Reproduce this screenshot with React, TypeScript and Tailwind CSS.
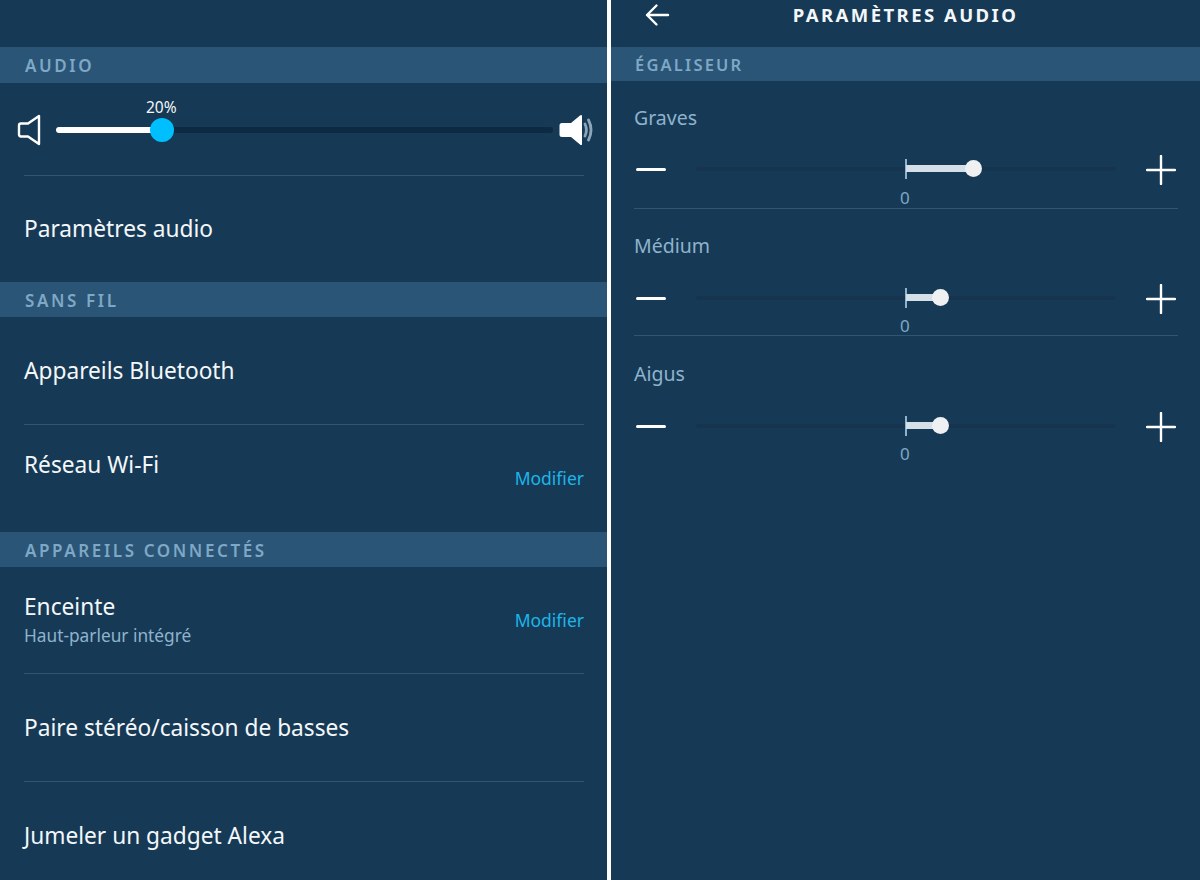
import React from "react";

const font = { fontFamily: '"Noto Sans", "Open Sans", sans-serif' };

function Band({ label, h = "h-[35px]", size = "pl-[25px] text-[17px] tracking-[2.6px]" }: { label: string; h?: string; size?: string }) {
  return (
    <div className={`${h} flex shrink-0 items-center bg-[#2a5576] pt-[2px] font-semibold text-[#7fa8c6] ${size}`}>
      {label}
    </div>
  );
}

function Row({ h, title, sub, action, divider }: { h: string; title: string; sub?: string; action?: string; divider?: boolean }) {
  return (
    <div className={`${h} ml-[24px] mr-[23px] flex shrink-0 items-center justify-between ${divider ? "border-b border-[#2f5675]" : ""}`}>
      <div className={`flex flex-col ${sub ? "pt-[2px]" : ""}`}>
        <span className="text-[22.7px] leading-[30px] text-[#f4f7f9]">{title}</span>
        {sub && <span className="text-[17.3px] leading-[28px] text-[#8fb3cc]">{sub}</span>}
      </div>
      {action && <span className="text-[17.5px] text-[#1db5e9]">{action}</span>}
    </div>
  );
}

function VolumeLow() {
  return (
    <svg width="24" height="32" viewBox="0 0 24 32" fill="none" className="shrink-0">
      <path d="M22 2 L22 30 L11 22.5 L4 22.5 Q2 22.5 2 20.5 L2 11.5 Q2 9.5 4 9.5 L11 9.5 Z" stroke="#fff" strokeWidth="2.4" strokeLinejoin="round" />
    </svg>
  );
}

function VolumeHigh() {
  return (
    <svg width="34" height="32" viewBox="0 0 34 32" fill="none" className="shrink-0">
      <path d="M23 1.5 L23 30.5 Q22 31.5 21 30.5 L12 23 L3 23 Q0.5 23 0.5 20.5 L0.5 11.5 Q0.5 9 3 9 L12 9 L21 1.5 Q22 0.5 23 1.5 Z" fill="#fff" />
      <path d="M26 10 Q28.8 16 26 22" stroke="#8ea5b7" strokeWidth="2.8" strokeLinecap="round" />
      <path d="M29.5 6 Q34.6 16 29.5 26" stroke="#8ea5b7" strokeWidth="2.8" strokeLinecap="round" />
    </svg>
  );
}

function BackArrow() {
  return (
    <svg width="26" height="24" viewBox="0 0 26 24" fill="none">
      <path d="M24 12 H3 M12.5 2.5 L3 12 L12.5 21.5" stroke="#fff" strokeWidth="2.4" strokeLinecap="round" strokeLinejoin="round" />
    </svg>
  );
}

function Plus() {
  return (
    <svg width="30" height="30" viewBox="0 0 30 30" fill="none" className="shrink-0">
      <path d="M1 15 H29 M15 1 V29" stroke="#fff" strokeWidth="2.4" strokeLinecap="round" />
    </svg>
  );
}

function EqBand({ label, fill, divider, h, lower }: { label: string; fill: number; divider?: boolean; h: string; lower?: boolean }) {
  return (
    <div className={`${h} flex shrink-0 flex-col ${divider ? "border-b border-[#2f5675]" : ""}`}>
      <div className="h-[25px] text-[19.5px] leading-[25px] text-[#8fb3cc]">{label}</div>
      <div className={`${lower ? "mt-[22px]" : "mt-[21px]"} flex h-[36px] items-center`}>
        <div className="ml-[2px] h-[3px] w-[30px] shrink-0 rounded-full bg-white" />
        <div className="relative ml-[30px] mr-[30px] h-[4px] flex-1 rounded-full bg-[#17344f]">
          <div className="absolute left-[209px] top-[-8px] h-[20px] w-[1.5px] bg-[#8fb3cc]" />
          <div className="absolute left-[210px] top-[-2px] h-[7px] rounded-r-sm bg-[#d5dfe7]" style={{ width: fill }} />
          <div className="absolute top-[-7px] h-[17px] w-[17px] rounded-full bg-[#eef0f2]" style={{ left: 210 + fill - 9 }} />
        </div>
        <div className="mr-[2px] translate-y-[1px]">
          <Plus />
        </div>
      </div>
      <div className="relative h-[19px]">
        <span className={`absolute left-[266px] ${lower ? "top-[-1px]" : "top-0"} text-[17px] leading-[22px] text-[#7fa8c6]`}>0</span>
      </div>
    </div>
  );
}

export default function App() {
  return (
    <div style={font} className="flex h-[880px] w-[1200px] overflow-hidden bg-[#163a56]">
      <div className="flex w-[607px] shrink-0 flex-col">
        <div className="h-[47px] shrink-0" />
        <Band label="AUDIO" h="h-[36px]" />
        <div className="ml-[24px] mr-[23px] h-[93px] shrink-0 border-b border-[#2f5675]">
          <div className="-ml-[7px] -mr-[9px] flex h-[94px] items-center pb-[1px]">
            <VolumeLow />
            <div className="relative ml-[15px] mr-[6px] h-[6px] flex-1 rounded-full bg-[#0e2942]">
              <div className="absolute left-0 top-0 h-[6px] w-[106px] rounded-full bg-white" />
              <div className="absolute left-[94px] top-[-9px] h-[24px] w-[24px] rounded-full bg-[#00bfff]" />
              <span className="absolute left-[90px] top-[-30px] text-[15.5px] leading-[20px] text-[#f4f7f9]">20%</span>
            </div>
            <VolumeHigh />
          </div>
        </div>
        <Row h="h-[106px]" title="Paramètres audio" />
        <Band label="SANS FIL" />
        <Row h="h-[108px]" title="Appareils Bluetooth" divider />
        <div className="ml-[24px] mr-[23px] flex h-[107px] shrink-0 justify-between">
          <span className="pt-[25px] text-[22.7px] leading-[30px] text-[#f4f7f9]">Réseau Wi-Fi</span>
          <span className="pt-[41px] text-[17.5px] leading-[24px] text-[#1db5e9]">Modifier</span>
        </div>
        <Band label="APPAREILS CONNECTÉS" />
        <Row h="h-[107px]" title="Enceinte" sub="Haut-parleur intégré" action="Modifier" divider />
        <Row h="h-[108px]" title="Paire stéréo/caisson de basses" divider />
        <Row h="h-[108px]" title="Jumeler un gadget Alexa" />
      </div>
      <div className="w-[4px] shrink-0 bg-white" />
      <div className="flex flex-1 flex-col">
        <div className="relative flex h-[47px] shrink-0 items-center justify-center pb-[17px]">
          <div className="absolute left-[33px] top-[3px]">
            <BackArrow />
          </div>
          <span className="text-[18.5px] font-bold tracking-[2.45px] text-[#f4f7f9]">PARAMÈTRES AUDIO</span>
        </div>
        <Band label="ÉGALISEUR" h="h-[34px]" size="pl-[24px] text-[16.5px] tracking-[2.2px]" />
        <div className="ml-[23px] mr-[22px] flex flex-col pt-[24px]">
          <EqBand label="Graves" fill={68} divider h="h-[104px]" />
          <div className="h-[24px] shrink-0" />
          <EqBand label="Médium" fill={35} divider h="h-[103px]" lower />
          <div className="h-[25px] shrink-0" />
          <EqBand label="Aigus" fill={35} h="h-[103px]" lower />
        </div>
      </div>
    </div>
  );
}
